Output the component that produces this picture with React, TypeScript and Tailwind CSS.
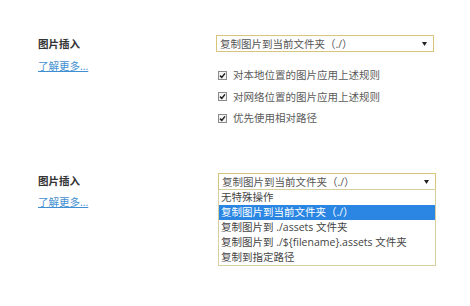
import { useState } from "react";

// 选项列表
const options = [
  "无特殊操作",
  "复制图片到当前文件夹（./）",
  "复制图片到 ./assets 文件夹",
  "复制图片到 ./${filename}.assets 文件夹",
  "复制到指定路径",
];

const rules = ["对本地位置的图片应用上述规则", "对网络位置的图片应用上述规则", "优先使用相对路径"];

function Check() {
  return (
    <span className="w-[9px] h-[9px] border border-[#8a8a8a] bg-[#f4f4f4] flex items-center justify-center">
      <svg width="7" height="7" viewBox="0 0 7 7">
        <path d="M1 3.6 L2.8 5.4 L6 1.4" fill="none" stroke="#222" strokeWidth="1.5" />
      </svg>
    </span>
  );
}

function Select({ value }: { value: string }) {
  return (
    <div className="h-[17px] border border-[#d8c57c] bg-white flex items-center justify-between pl-[3px] pr-[6px] text-[#555]">
      <span>{value}</span>
      <svg width="5" height="4" viewBox="0 0 5 4">
        <path d="M0 0 H5 L2.5 4 Z" fill="#222" />
      </svg>
    </div>
  );
}

export default function App() {
  const [selected] = useState(1);

  return (
    <div
      className="w-[470px] h-[306px] bg-white pt-[35px] pl-[38px] text-[10.5px] leading-[14px]"
      style={{ fontFamily: '"Open Sans", "Noto Sans CJK SC", sans-serif' }}
    >
      {/* 区块 1 */}
      <div className="flex">
        <div className="w-[178px] pt-[2px]">
          <p className="font-semibold text-[#333]">图片插入</p>
          <a className="block mt-[8px] text-[#3f8fd2] underline">了解更多...</a>
        </div>
        <div className="w-[218px]">
          <Select value={options[selected]} />
          <div className="mt-[16px] flex flex-col gap-[7.5px] pl-[2px]">
            {rules.map((r) => (
              <label key={r} className="flex items-center gap-[6px] text-[#5a5a5a]">
                <Check />
                <span>{r}</span>
              </label>
            ))}
          </div>
        </div>
      </div>

      {/* 区块 2 */}
      <div className="flex mt-[48px]">
        <div className="w-[178px] pt-[1px]">
          <p className="font-semibold text-[#333]">图片插入</p>
          <a className="block mt-[7px] text-[#3f8fd2] underline">了解更多...</a>
        </div>
        <div className="w-[218px] ml-[2px] relative">
          <Select value={options[selected]} />
          <div className="absolute left-0 right-0 top-[16px] border border-[#d8cf9e] bg-white">
            {options.map((o, i) => (
              <div
                key={o}
                className={
                  i === selected
                    ? "h-[15px] leading-[15px] pl-[2px] bg-[#2a86e2] text-white"
                    : "h-[15px] leading-[15px] pl-[2px] text-[#444]"
                }
              >
                {o}
              </div>
            ))}
          </div>
        </div>
      </div>
    </div>
  );
}
